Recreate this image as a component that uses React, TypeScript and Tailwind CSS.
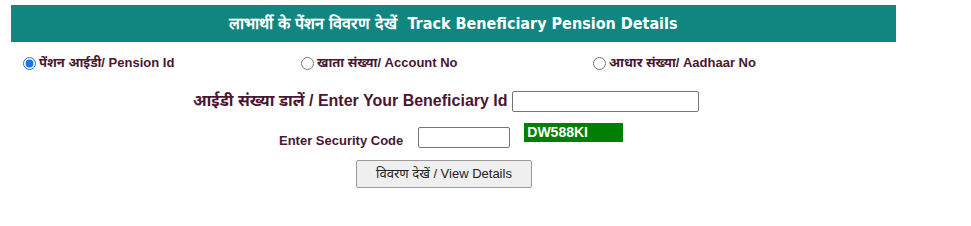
import React from "react";

export default function App() {
  const maroon = "text-[#4a1632]";
  return (
    <div className="w-[971px] h-[226px] bg-white font-['Liberation_Sans',_'Noto_Sans',_sans-serif]">
      <div className="pt-[5px] pl-[11px]">
        <div className="w-[885px] h-[37px] bg-[#118580] flex items-center justify-center text-white font-bold text-[16px] font-['Liberation_Sans_Narrow',_'DejaVu_Sans_Condensed',_'Liberation_Sans',_sans-serif]">
          लाभार्थी के पेंशन विवरण देखें&nbsp;&nbsp;Track Beneficiary Pension Details
        </div>
      </div>
      <div className={`flex items-center h-[40px] mt-[1px] text-[13px] font-bold ${maroon}`}>
        <label className="flex items-center ml-[23px] w-[278px]">
          <input type="radio" name="t" defaultChecked className="m-0 mr-[3px] w-[13px] h-[13px] accent-[#1a73e8]" />
          पेंशन आईडी/ Pension Id
        </label>
        <label className="flex items-center w-[292px]">
          <input type="radio" name="t" className="m-0 mr-[3px] w-[13px] h-[13px]" />
          खाता संख्या/ Account No
        </label>
        <label className="flex items-center">
          <input type="radio" name="t" className="m-0 mr-[3px] w-[13px] h-[13px]" />
          आधार संख्या/ Aadhaar No
        </label>
      </div>
      <div className="flex items-center h-[24px] mt-[6px] pl-[193px]">
        <span className={`text-[16px] font-bold ${maroon}`}>आईडी संख्या डालें / Enter Your Beneficiary Id</span>
        <input type="text" className="ml-[4px] w-[187px] h-[21px] border border-[#767676] rounded-[2px] bg-white" />
      </div>
      <div className="flex items-start mt-[10px] pl-[279px] h-[29px]">
        <span className={`mt-[8px] text-[13px] font-bold ${maroon}`}>Enter Security Code</span>
        <input type="text" className="ml-[15px] mt-[4px] w-[92px] h-[21px] border border-[#767676] rounded-[2px] bg-white" />
        <div className="ml-[14px] w-[99px] h-[19px] bg-[#008000] text-white font-bold text-[14px] leading-[19px] pl-[3px]">DW588KI</div>
      </div>
      <div className="pl-[356px] mt-[8px]">
        <button className="w-[176px] h-[28px] bg-[#efefef] border border-[#9a9a9a] rounded-[2px] text-[13px] text-[#222]">
          विवरण देखें / View Details
        </button>
      </div>
    </div>
  );
}
